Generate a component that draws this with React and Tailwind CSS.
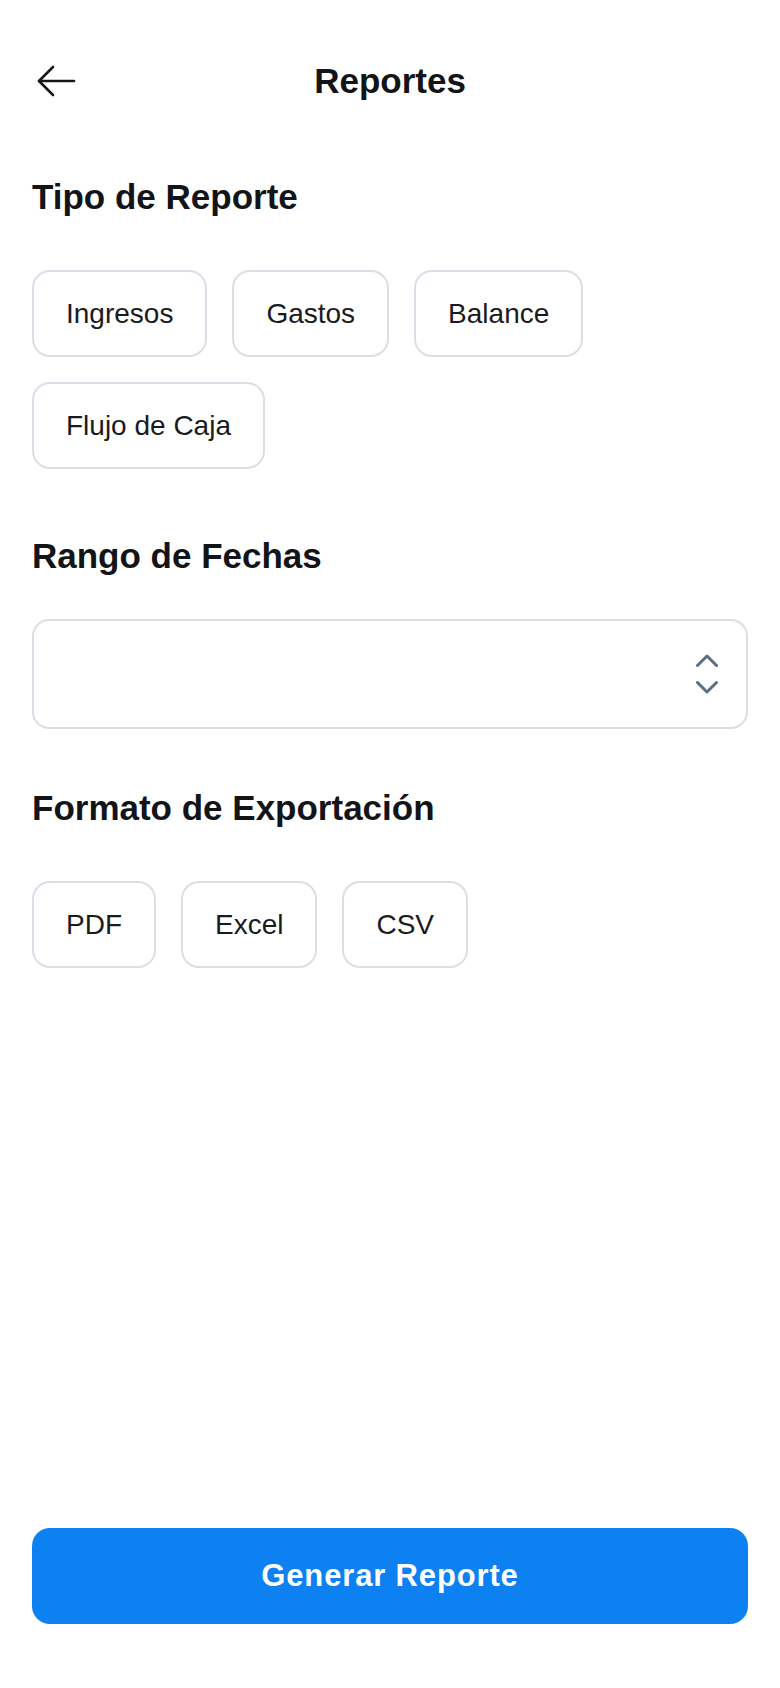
import { useState } from "react";

const reportTypes = ["Ingresos", "Gastos", "Balance", "Flujo de Caja"];
const formats = ["PDF", "Excel", "CSV"];

function BackArrow() {
  return (
    <svg width="40" height="32" viewBox="0 0 40 32" fill="none" stroke="#16181c" strokeWidth="2.6" strokeLinecap="round" strokeLinejoin="round">
      <path d="M2 16H37" />
      <path d="M16 2L2 16L16 30" />
    </svg>
  );
}

function UpDown() {
  return (
    <svg width="22" height="40" viewBox="0 0 22 40" fill="none" stroke="#5d6e82" strokeWidth="3" strokeLinecap="round" strokeLinejoin="round">
      <path d="M1.5 11.5L11 2L20.5 11.5" />
      <path d="M1.5 28.5L11 38L20.5 28.5" />
    </svg>
  );
}

function Chip({ label, active, onClick }) {
  return (
    <button
      type="button"
      onClick={onClick}
      className={
        "h-[87px] px-[32px] flex items-center rounded-[18px] border-2 bg-white text-[28px] leading-[40px] text-[#1a1b1e] " +
        (active ? "border-[#0d80f2]" : "border-[#dadfe7]")
      }
    >
      {label}
    </button>
  );
}

export default function App() {
  const [tipo, setTipo] = useState(null);
  const [formato, setFormato] = useState(null);

  return (
    <div className="min-h-screen flex flex-col bg-white px-8 font-['Liberation_Sans',Arial,sans-serif]">
      {/* header */}
      <div className="pt-[60px] grid grid-cols-[1fr_auto_1fr] items-center h-[41px] box-content">
        <button type="button" className="justify-self-start ml-[5px]">
          <BackArrow />
        </button>
        <h1 className="text-[35px] leading-[41px] font-bold text-[#121417]">Reportes</h1>
        <div />
      </div>

      <h2 className="mt-[75px] text-[35px] leading-[42px] font-bold text-[#121417]">Tipo de Reporte</h2>
      <div className="mt-[52px] flex flex-wrap gap-x-[25px] gap-y-[25px]">
        {reportTypes.map((t) => (
          <Chip key={t} label={t} active={tipo === t} onClick={() => setTipo(t)} />
        ))}
      </div>

      <h2 className="mt-[66px] text-[35px] leading-[42px] font-bold text-[#121417]">Rango de Fechas</h2>
      <div className="mt-[42px] h-[110px] rounded-[17px] border-2 border-[#dadfe7] flex items-center justify-end pr-[28px]">
        <UpDown />
      </div>

      <h2 className="mt-[58px] text-[35px] leading-[42px] font-bold text-[#121417]">Formato de Exportación</h2>
      <div className="mt-[52px] flex flex-wrap gap-[25px]">
        {formats.map((f) => (
          <Chip key={f} label={f} active={formato === f} onClick={() => setFormato(f)} />
        ))}
      </div>

      <div className="mt-auto pb-[64px]">
        <button
          type="button"
          className="w-full h-[96px] rounded-[18px] bg-[#0d80f2] text-white text-[31px] font-bold tracking-[0.85px]"
        >
          Generar Reporte
        </button>
      </div>
    </div>
  );
}
